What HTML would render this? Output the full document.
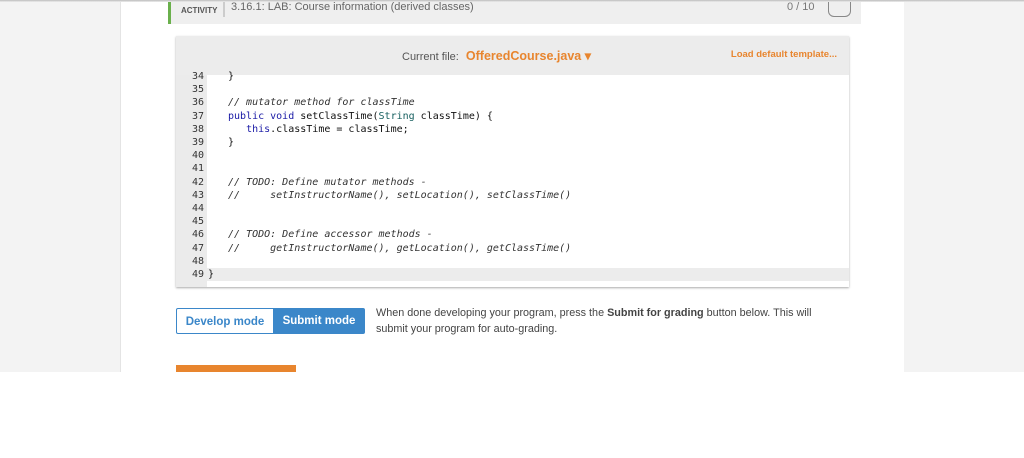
<!DOCTYPE html><html><head><style>
body{margin:0;width:1024px;height:458px;background:#fff;font-family:"Liberation Sans",sans-serif;position:relative;overflow:hidden}
.bgL{position:absolute;left:0;top:0;width:120px;height:372px;background:#f3f3f3}
.bgR{position:absolute;left:903px;top:0;width:121px;height:372px;background:#f3f3f3;border-left:1px solid #e4e4e4}
.card{position:absolute;left:120px;top:0;width:783px;height:372px;background:#fff;border-left:1px solid #e4e4e4}
.top{position:absolute;left:0;top:0;width:1024px;height:2px;background:linear-gradient(#bbb,#eee)}
.hdr{position:absolute;left:168px;top:0;width:690px;height:24px;background:#efefef;border-left:3px solid #6ab04c}
.act{position:absolute;left:10px;top:6px;font-size:8px;font-weight:bold;color:#555}
.sep{position:absolute;left:52px;top:0;width:2px;height:17px;background:#ccc}
.ttl{position:absolute;left:60px;top:1px;font-size:11px;line-height:12px;color:#666}
.score{position:absolute;left:616px;top:1px;font-size:11px;line-height:12px;color:#777}
.box{position:absolute;left:657px;top:0;width:21px;height:16px;border:1px solid #888;border-top:none;border-radius:0 0 6px 6px}
.ed{position:absolute;left:176px;top:36px;width:673px;height:251px;background:#fff;box-shadow:0 1px 2px #aaa}
.tb{height:39px;background:#ececec;position:relative}
.cf{position:absolute;left:226px;top:12px;font-size:11px;color:#555}
.cf b{color:#e8852e;font-size:12.5px;font-weight:bold;margin-left:4px}
.ld{position:absolute;right:12px;top:13px;font-size:9.5px;color:#e8852e;font-weight:bold}
.gut{position:absolute;left:0;top:39px;width:31px;height:212px;background:#ebebeb}
pre{margin:0;position:absolute;left:0;top:34px;font-family:"DejaVu Sans Mono",monospace;font-size:10px;line-height:13.2px;color:#111}
.n{display:inline-block;width:28px;text-align:right;color:#333;margin-right:24px}
.c{color:#333;font-style:italic}.k{color:#1a1aa6}.t{color:#176060}
.hl{position:absolute;left:31px;top:232px;width:642px;height:13px;background:#ececec}
.btn{position:absolute;top:308px;height:26px;font-size:11.5px;font-weight:bold;line-height:26px;text-align:center;box-sizing:border-box}
.txt{position:absolute;left:376px;top:306px;font-size:10.8px;color:#444;line-height:15.5px;width:452px}
.or{position:absolute;left:176px;top:365px;width:120px;height:7px;background:#e8852e}
</style></head><body>
<div class="bgL"></div><div class="bgR"></div><div class="card"></div>
<div class="hdr"><div class="act">ACTIVITY</div><div class="sep"></div><div class="ttl">3.16.1: LAB: Course information (derived classes)</div><div class="score">0 / 10</div><div class="box"></div></div>
<div class="top"></div>
<div class="ed"><div class="tb"><div class="cf">Current file: <b>OfferedCourse.java ▾</b></div><div class="ld">Load default template...</div></div>
<div class="gut"></div><div class="hl"></div>
<pre><span class="n">34</span>}
<span class="n">35</span>
<span class="n">36</span><span class="c">// mutator method for classTime</span>
<span class="n">37</span><span class="k">public void</span> setClassTime(<span class="t">String</span> classTime) {
<span class="n">38</span>   <span class="k">this</span>.classTime = classTime;
<span class="n">39</span>}
<span class="n">40</span>
<span class="n">41</span>
<span class="n">42</span><span class="c">// TODO: Define mutator methods -</span>
<span class="n">43</span><span class="c">//     setInstructorName(), setLocation(), setClassTime()</span>
<span class="n">44</span>
<span class="n">45</span>
<span class="n">46</span><span class="c">// TODO: Define accessor methods -</span>
<span class="n">47</span><span class="c">//     getInstructorName(), getLocation(), getClassTime()</span>
<span class="n">48</span>
<span class="n" style="margin-right:4px">49</span>}</pre></div>
<div class="btn" style="left:176px;width:98px;border:1px solid #3b87c9;color:#3b87c9;background:#fff;border-radius:2px 0 0 2px">Develop mode</div>
<div class="btn" style="left:273px;width:92px;background:#3b87c9;color:#fff;border-radius:0 2px 2px 0">Submit mode</div>
<div class="txt">When done developing your program, press the <b>Submit for grading</b> button below. This will submit your program for auto-grading.</div>
<div class="or"></div>
</body></html>
